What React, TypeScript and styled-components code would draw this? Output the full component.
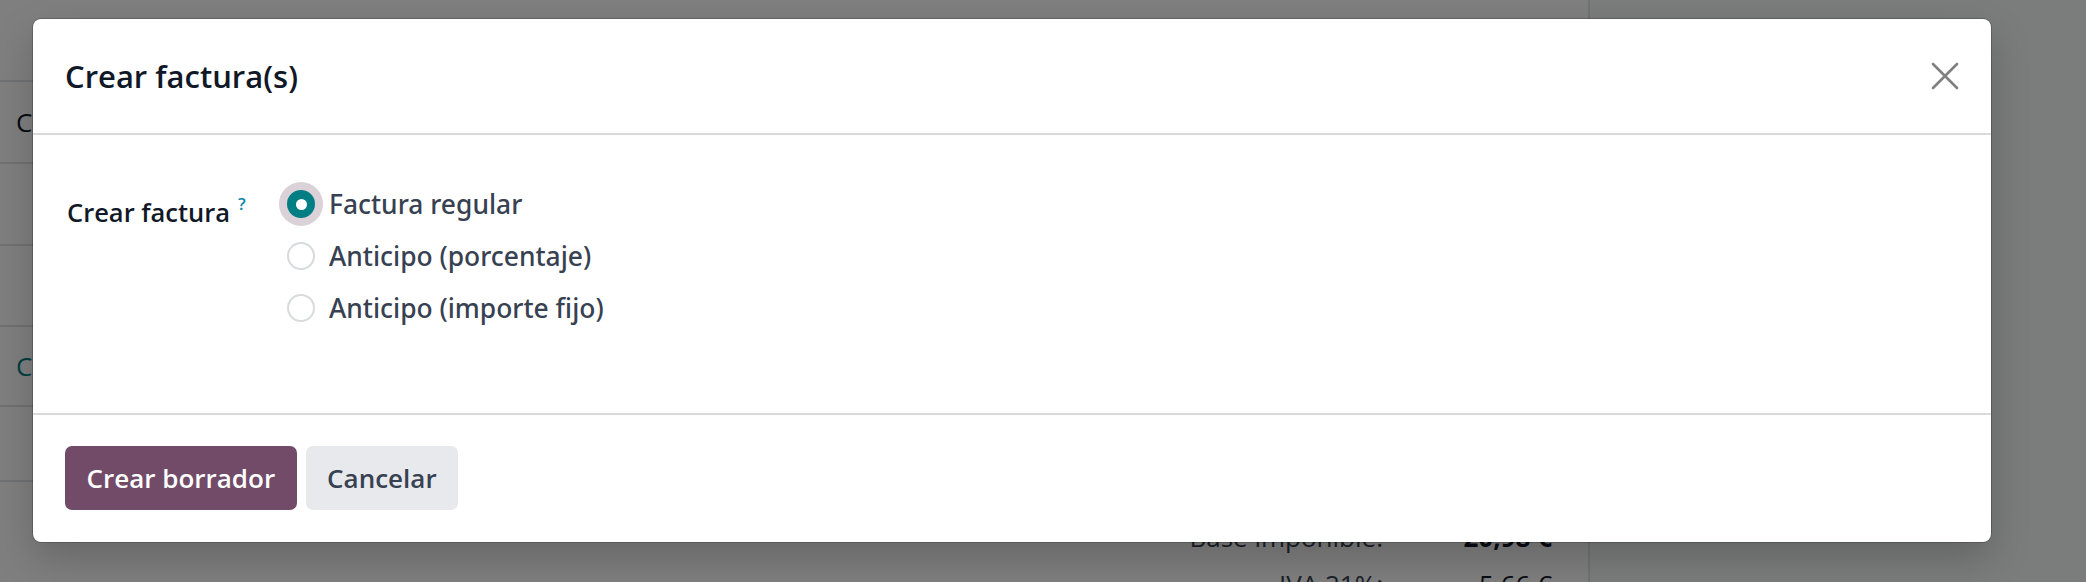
import React from "react"
import styled, { createGlobalStyle } from "styled-components"

// global
const GlobalStyle = createGlobalStyle`
  html, body {
    margin: 0;
    padding: 0;
  }
  body {
    font-family: "Open Sans", "Noto Sans", sans-serif;
    font-size: 26px;
    color: #374151;
    background: #fff;
  }
  * {
    box-sizing: border-box;
  }
`

// page behind the dialog
const Page = styled.div`
  position: relative;
  width: 2086px;
  height: 582px;
  overflow: hidden;
  display: flex;
`

const Main = styled.div`
  width: 1590px;
  flex-shrink: 0;
  border-right: 2px solid #e2e4e6;
  padding-top: 80px;
  background: #fff;
`

const Chatter = styled.div`
  flex: 1;
  background: #f7f8f8;
`

const LinesTable = styled.div`
  border-top: 2px solid #dee2e6;
`

const LineRow = styled.div<{ $h: number }>`
  height: ${({ $h }) => $h + 2}px;
  display: flex;
  align-items: center;
  padding-left: 16px;
  border-bottom: 2px solid #dee2e6;
`

const Cell = styled.span<{ $link?: boolean }>`
  color: ${({ $link }) => ($link ? "#017e84" : "#111827")};
`

const Totals = styled.div`
  margin-top: 32px;
  display: grid;
  grid-template-columns: auto 150px;
  column-gap: 19px;
  justify-content: end;
  padding-right: 36px;
  line-height: 47px;
`

const TotalLabel = styled.span`
  text-align: right;
  color: #374151;
`

const TotalValue = styled.span<{ $strong?: boolean }>`
  text-align: right;
  color: #111827;
  font-weight: ${({ $strong }) => ($strong ? 700 : 400)};
`

// dialog
const Backdrop = styled.div`
  position: absolute;
  inset: 0;
  background: rgba(0, 0, 0, 0.5);
  padding: 19px 95px 0 33px;
`

const Dialog = styled.div`
  width: 1958px;
  background: #fff;
  border-radius: 8px;
  box-shadow: 0 0 0 1px rgba(0, 0, 0, 0.2), 0 16px 40px rgba(0, 0, 0, 0.2);
  overflow: hidden;
`

const Header = styled.div`
  height: 116px;
  padding: 0 32px;
  display: flex;
  align-items: center;
  justify-content: space-between;
  border-bottom: 2px solid #d8dadd;
`

const Title = styled.h4`
  margin: 0;
  font-size: 31px;
  font-weight: 600;
  color: #111827;
`

const CloseButton = styled.button`
  border: 0;
  background: none;
  padding: 0;
  width: 28px;
  height: 28px;
  display: flex;
  cursor: pointer;
`

const Body = styled.div`
  padding: 43px 32px 79px;
  display: grid;
  grid-template-columns: 222px 1fr;
`

const FieldLabel = styled.label`
  padding-left: 2px;
  line-height: 52px;
  font-size: 25.5px;
  font-weight: 600;
  color: #111827;
`

const Help = styled.sup`
  margin-left: 8px;
  font-size: 17px;
  font-weight: 600;
  color: #0b86a8;
  vertical-align: 12px;
`

const RadioList = styled.div`
  display: flex;
  flex-direction: column;
`

const RadioItem = styled.label`
  height: 52px;
  display: flex;
  align-items: center;
  gap: 14px;
  line-height: 52px;
  font-family: "Noto Sans", "Open Sans", sans-serif;
  font-size: 26.4px;
  font-weight: 500;
  color: #374151;
  cursor: pointer;
`

const RadioDot = styled.span<{ $checked?: boolean }>`
  width: 28px;
  height: 28px;
  border-radius: 50%;
  flex-shrink: 0;
  border: 2px solid ${({ $checked }) => ($checked ? "#017e84" : "#d8dadd")};
  background: ${({ $checked }) => ($checked ? "#017e84" : "#fff")};
  box-shadow: ${({ $checked }) =>
    $checked ? "0 0 0 8px rgba(113, 75, 103, 0.25)" : "none"};
  display: flex;
  align-items: center;
  justify-content: center;

  &::after {
    content: "";
    display: ${({ $checked }) => ($checked ? "block" : "none")};
    width: 11px;
    height: 11px;
    border-radius: 50%;
    background: #fff;
  }
`

const Footer = styled.div`
  border-top: 2px solid #d8dadd;
  padding: 31px 32px 32px;
  display: flex;
  gap: 9px;
`

const Button = styled.button<{ $primary?: boolean }>`
  height: 64px;
  padding: 0 21.5px;
  border: 0;
  border-radius: 7px;
  font-family: inherit;
  font-size: 26px;
  font-weight: 600;
  background: ${({ $primary }) => ($primary ? "#714b67" : "#e7e9ed")};
  color: ${({ $primary }) => ($primary ? "#fff" : "#374151")};
  cursor: pointer;
`

const options = [
  { id: "delivered", label: "Factura regular", checked: true },
  { id: "percentage", label: "Anticipo (porcentaje)" },
  { id: "fixed", label: "Anticipo (importe fijo)" },
]

const rows = [
  { h: 80, text: "Cantidad" },
  { h: 80, text: "" },
  { h: 79, text: "" },
  { h: 78, text: "Catálogo", link: true },
  { h: 73, text: "" },
]

export default function App() {
  return (
    <>
      <GlobalStyle />
      <Page>
        <Main>
          <LinesTable>
            {rows.map((r, i) => (
              <LineRow key={i} $h={r.h}>
                <Cell $link={r.link}>{r.text}</Cell>
              </LineRow>
            ))}
          </LinesTable>
          <Totals>
            <TotalLabel>Base imponible:</TotalLabel>
            <TotalValue $strong>20,98 €</TotalValue>
            <TotalLabel>IVA 21%:</TotalLabel>
            <TotalValue>5,66 €</TotalValue>
          </Totals>
        </Main>
        <Chatter />

        <Backdrop>
          <Dialog role="dialog">
            <Header>
              <Title>Crear factura(s)</Title>
              <CloseButton aria-label="Cerrar">
                <svg width="28" height="28" viewBox="0 0 28 28">
                  <path
                    d="M2 2 L26 26 M26 2 L2 26"
                    stroke="#808080"
                    strokeWidth="2.6"
                    strokeLinecap="round"
                  />
                </svg>
              </CloseButton>
            </Header>

            <Body>
              <FieldLabel>
                Crear factura<Help>?</Help>
              </FieldLabel>
              <RadioList>
                {options.map((o) => (
                  <RadioItem key={o.id}>
                    <RadioDot $checked={o.checked} />
                    {o.label}
                  </RadioItem>
                ))}
              </RadioList>
            </Body>

            <Footer>
              <Button $primary>Crear borrador</Button>
              <Button>Cancelar</Button>
            </Footer>
          </Dialog>
        </Backdrop>
      </Page>
    </>
  )
}
